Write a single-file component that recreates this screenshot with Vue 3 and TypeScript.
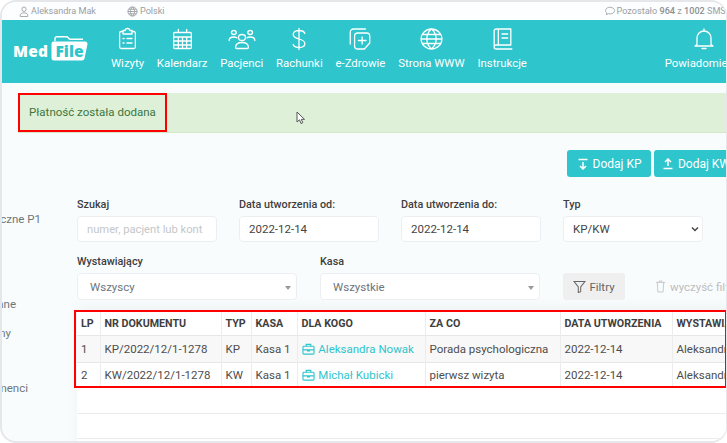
<script setup lang="ts">
interface NavItem {
  label: string;
  icon: string;
  w: number;
}

// sciezki ikon w menu, rysowane w viewBox 24x24
const nav: NavItem[] = [
  { label: "Wizyty", w: 27, icon: "M8 4.500H6.500A1.500 1.500 0 0 0 5 6v14a1.500 1.500 0 0 0 1.500 1.500h11A1.500 1.500 0 0 0 19 20V6a1.500 1.500 0 0 0-1.500-1.500H16M8 3.500h2a2 2 0 0 1 4 0h2V7H8zM8 11.500h1M11.500 11.500H16M8 16h1M11.500 16H16" },
  { label: "Kalendarz", w: 25, icon: "M4.500 5.500h15a1 1 0 0 1 1 1v14a1 1 0 0 1-1 1h-15a1 1 0 0 1-1-1v-14a1 1 0 0 1 1-1zM3.500 10h17M3.500 14h17M3.500 18h17M8 10v11.500M12 10v11.500M16 10v11.500M8 2.500v3M16 2.500v3" },
  { label: "Pacjenci", w: 28, icon: "M12 7.500a3 3 0 1 0 0 6 3 3 0 0 0 0-6zM5 3.500a2 2 0 1 0 0 4 2 2 0 0 0 0-4zM19 3.500a2 2 0 1 0 0 4 2 2 0 0 0 0-4zM1 13.500c0-2.500 1.500-3.500 4-3.500 1 0 2 .2 2.600.8M23 13.500c0-2.500-1.500-3.500-4-3.500-1 0-2 .2-2.600.8M6.500 20.500c0-3.500 2-5 5.500-5s5.500 1.500 5.500 5c0 .6-.4 1-1 1h-9c-.6 0-1-.4-1-1z" },
  { label: "Rachunki", w: 28, icon: "M12 1.500v21M17 6.500c-.5-2-2.500-3-5-3-3 0-5 1.500-5 4s2 3.500 5 4.500 5 2 5 4.500-2 4-5 4c-2.500 0-4.500-1-5-3" },
  { label: "e-Zdrowie", w: 26, icon: "M3 17V5a3 3 0 0 1 3-3h11M7 9a3 3 0 0 1 3-3h8a3 3 0 0 1 3 3v7l-5 6h-6a3 3 0 0 1-3-3zM14 10v7M10.500 13.500h7" },
  { label: "Strona WWW", w: 25, icon: "M12 2a10 10 0 1 0 0 20 10 10 0 0 0 0-20zM2 12h20M3.300 7.500h17.400M3.300 16.500h17.400M12 2c-6 5.500-6 14.500 0 20M12 2c6 5.500 6 14.500 0 20" },
  { label: "Instrukcje", w: 25, icon: "M4 19V4a2 2 0 0 1 2-2h14v16H6a2 2 0 0 0-2 2 2 2 0 0 0 2 2h15M8 2v16M11.500 7h5.500M11.500 11h5.500" },
  { label: "Powiadomienia", w: 24, icon: "M5 17.500V11a7 7 0 0 1 14 0v6.500l2 1.500H3zM12 4V2M10 21.500h4" },
];

interface Row {
  lp: number;
  nr: string;
  typ: string;
  kasa: string;
  dla: string;
  za: string;
  data: string;
  kto: string;
}

const rows: Row[] = [
  { lp: 1, nr: "KP/2022/12/1-1278", typ: "KP", kasa: "Kasa 1", dla: "Aleksandra Nowak", za: "Porada psychologiczna", data: "2022-12-14", kto: "Aleksandra Mak" },
  { lp: 2, nr: "KW/2022/12/1-1278", typ: "KW", kasa: "Kasa 1", dla: "Michał Kubicki", za: "pierwsz wizyta", data: "2022-12-14", kto: "Aleksandra Mak" },
];

const side = [
  { text: "Raporty roczne P1", cls: "s1" },
  { text: "Dane firmowane", cls: "s2" },
  { text: "Pracownicy firmy", cls: "s3" },
  { text: "Abonamenci", cls: "s4" },
];
</script>

<template>
  <div class="frame">
    <div class="topbar">
      <span class="tb-item user">
        <svg width="10" height="11" viewBox="0 0 12 12" preserveAspectRatio="none" fill="none" stroke="#9a9fa3" stroke-width="1">
          <circle cx="6" cy="3.500" r="2.500" />
          <path d="M1.500 11.500V10c0-1.500 1.500-2.500 4.500-2.500s4.500 1 4.500 2.500v1.500z" />
        </svg>
        Aleksandra Mak
      </span>
      <span class="tb-item lang">
        <svg width="11" height="11" viewBox="0 0 12 12" fill="none" stroke="#9a9fa3" stroke-width="1">
          <circle cx="6" cy="6" r="5" />
          <path d="M1 6h10M2 3.500h8M2 8.500h8M6 1c-3 2.800-3 7.200 0 10M6 1c3 2.800 3 7.200 0 10" />
        </svg>
        Polski
      </span>
      <span class="tb-item sms">
        <svg width="10" height="10" viewBox="0 0 12 12" fill="none" stroke="#9a9fa3" stroke-width="1">
          <path d="M6 1.500c3 0 5.500 1.700 5.500 4s-2.500 4-5.500 4c-.7 0-1.300-.1-1.900-.3L1.500 10.500l.8-2.200C1.200 7.500.5 6.600.5 5.500c0-2.300 2.500-4 5.500-4z" />
        </svg>
        <span>Pozostało <b>964</b> z <b>1002</b> SMS</span>
      </span>
    </div>

    <header class="header">
      <div class="logo">
        <span class="med">Med</span>
        <svg class="folder" width="37" height="25" viewBox="0 0 37 25">
          <path d="M4 5V2.500Q4 .8 6 .8h9q1.500 0 2.500 1.200l1 1.200H32" fill="none" stroke="#fff" stroke-width="1.400" />
          <path d="M2.500 5.500H34q2.500 0 2.500 2.500L33.500 22.500q-.5 2-2.500 2H3q-2.500 0-2.500-2.500V7.500q0-2 2-2z" fill="#fff" />
          <text x="4.500" y="20.500" class="file">File</text>
        </svg>
      </div>
      <nav class="nav">
        <a v-for="item in nav" :key="item.label" class="nav-item">
          <svg :width="item.w" height="24" viewBox="0 0 24 24" preserveAspectRatio="none" fill="none" stroke="#fff" stroke-width="1.300" stroke-linecap="round" stroke-linejoin="round">
            <path :d="item.icon" vector-effect="non-scaling-stroke" />
          </svg>
          <span>{{ item.label }}</span>
        </a>
      </nav>
    </header>

    <div class="alert">
      <div class="alert-mark">Płatność została dodana</div>
      <svg class="cursor" width="10" height="14" viewBox="0 0 10 14">
        <path d="M1 1v10l2.500-2.200L5 12.500l1.800-.8L5.300 8.300H8.500z" fill="#fff" stroke="#555" stroke-width="1" />
      </svg>
    </div>

    <div class="content">
      <aside class="side">
        <div v-for="s in side" :key="s.cls" class="side-item" :class="s.cls">{{ s.text }}</div>
      </aside>

      <main class="main">
        <div class="actions">
          <button class="btn">
            <svg width="12" height="12" viewBox="0 0 12 12" fill="none" stroke="#fff" stroke-width="1.500">
              <path d="M1.500 1.500h9M6 4v7M3 8l3 3 3-3" />
            </svg>
            Dodaj KP
          </button>
          <button class="btn">
            <svg width="12" height="12" viewBox="0 0 12 12" fill="none" stroke="#fff" stroke-width="1.500">
              <path d="M1.500 10.500h9M6 8V1M3 4l3-3 3 3" />
            </svg>
            Dodaj KW
          </button>
        </div>

        <div class="filters">
          <label class="field">
            <span class="lbl">Szukaj</span>
            <span class="box placeholder">numer, pacjent lub kont</span>
          </label>
          <label class="field">
            <span class="lbl">Data utworzenia od:</span>
            <span class="box">2022-12-14</span>
          </label>
          <label class="field">
            <span class="lbl">Data utworzenia do:</span>
            <span class="box">2022-12-14</span>
          </label>
          <label class="field">
            <span class="lbl">Typ</span>
            <span class="box typ">
              KP/KW
              <svg width="8" height="6" viewBox="0 0 8 6" fill="none" stroke="#444" stroke-width="1.400"><path d="M1 1.500l3 3 3-3" /></svg>
            </span>
          </label>
        </div>

        <div class="filters second">
          <label class="field wide">
            <span class="lbl">Wystawiający</span>
            <span class="box sel">Wszyscy<i class="caret"></i></span>
          </label>
          <label class="field wide">
            <span class="lbl">Kasa</span>
            <span class="box sel">Wszystkie<i class="caret"></i></span>
          </label>
          <button class="filter-btn">
            <svg width="13" height="13" viewBox="0 0 14 14" fill="none" stroke="#666" stroke-width="1.100">
              <path d="M1 1.500h12L8.300 7.500v5l-2.600 1V7.500z" />
            </svg>
            Filtry
          </button>
          <span class="clear">
            <svg width="11" height="13" viewBox="0 0 12 14" fill="none" stroke="#c4c4c4" stroke-width="1">
              <path d="M1 2.500h10M2.500 2.500l.7 10.500h5.600l.7-10.500M4.500 2.500V1h3v1.500" />
            </svg>
            wyczyść filtry
          </span>
        </div>

        <section class="card">
          <div class="mark">
            <table class="grid">
              <colgroup>
                <col style="width: 23px" />
                <col style="width: 121px" />
                <col style="width: 30px" />
                <col style="width: 46px" />
                <col style="width: 128px" />
                <col style="width: 135px" />
                <col style="width: 112px" />
                <col style="width: 120px" />
              </colgroup>
              <thead>
                <tr>
                  <th>LP</th>
                  <th>NR DOKUMENTU</th>
                  <th>TYP</th>
                  <th>KASA</th>
                  <th>DLA KOGO</th>
                  <th>ZA CO</th>
                  <th>DATA UTWORZENIA</th>
                  <th>WYSTAWIAJĄCY</th>
                </tr>
              </thead>
              <tbody>
                <tr v-for="r in rows" :key="r.lp">
                  <td>{{ r.lp }}</td>
                  <td>{{ r.nr }}</td>
                  <td>{{ r.typ }}</td>
                  <td>{{ r.kasa }}</td>
                  <td class="who">
                    <svg width="13" height="12" viewBox="0 0 14 13" fill="none" stroke="#2ec5cd" stroke-width="1.200">
                      <rect x="1" y="3.500" width="12" height="8.500" rx="1" />
                      <path d="M4.500 3.500V1.500h5v2M1 7.500h12M6 7.500v1h2v-1" />
                    </svg>
                    {{ r.dla }}
                  </td>
                  <td>{{ r.za }}</td>
                  <td>{{ r.data }}</td>
                  <td>{{ r.kto }}</td>
                </tr>
              </tbody>
            </table>
          </div>
          <div class="blank first"></div>
          <div class="blank"></div>
        </section>
      </main>
    </div>
  </div>
</template>

<style>
html,
body {
  margin: 0;
  background: #fff;
  overflow: hidden;
}
</style>

<style scoped>
.frame {
  box-sizing: border-box;
  width: 727px;
  height: 443px;
  overflow: hidden;
  border: 2px solid #e6e7ea;
  border-right-width: 1px;
  border-radius: 16px;
  background: #f9fcfd;
  font-family: Roboto, "Liberation Sans", sans-serif;
  color: #4a4a4a;
}

.topbar {
  display: flex;
  align-items: center;
  height: 18px;
  padding-left: 17px;
  background: #fcfeff;
  font-size: 9.100px;
  color: #9a9fa3;
  white-space: nowrap;
}

.tb-item {
  display: inline-flex;
  align-items: center;
  gap: 2px;
}

.tb-item b {
  font-weight: 500;
  color: #8a8f93;
}

.lang {
  margin-left: 31px;
}

.sms {
  margin-left: 440px;
}

.header {
  display: flex;
  height: 63px;
  background: #2ec5cd;
  color: #fff;
  overflow: hidden;
}

.logo {
  display: flex;
  align-items: flex-end;
  width: 109px;
  flex: none;
  box-sizing: border-box;
  padding: 0 0 22px 11px;
  gap: 3px;
}

.med {
  font-family: "Open Sans", sans-serif;
  font-weight: 800;
  font-size: 15.500px;
  line-height: 18px;
  letter-spacing: 0.2px;
  margin-bottom: 1px;
}

.folder {
  flex: none;
}

.file {
  font-family: "Open Sans", sans-serif;
  font-weight: 800;
  font-size: 15.500px;
  fill: #2ec5cd;
}

.nav {
  display: flex;
  gap: 12.800px;
  white-space: nowrap;
}

.nav-item {
  display: flex;
  flex-direction: column;
  align-items: center;
  padding-top: 7px;
  font-size: 11.400px;
  line-height: 14px;
  color: #fff;
}

.nav-item span {
  margin-top: 5px;
}

.nav-item:last-child {
  margin-left: 125px;
}

.alert {
  position: relative;
  height: 40px;
  margin: 10px 0 0 16px;
  box-sizing: border-box;
  background: #dff0d8;
  border-bottom: 1px solid #d6e9c6;
  color: #3c763d;
  font-size: 11.500px;
}

.alert-mark {
  box-sizing: border-box;
  width: 149px;
  height: 39px;
  padding-left: 9px;
  border: 2px solid #f00;
  line-height: 35px;
  white-space: nowrap;
}

.cursor {
  position: absolute;
  left: 278px;
  top: 18px;
}

.content {
  display: flex;
}

.side {
  flex: none;
  width: 75px;
  overflow: hidden;
  font-size: 11.500px;
  color: #6d767b;
  white-space: nowrap;
}

.side-item {
  line-height: 14px;
  display: flex;
  justify-content: flex-end;
}

.s1 {
  margin-top: 79px;
  margin-right: 36px;
}

.s2 {
  margin-top: 71px;
  margin-right: 61px;
}

.s3 {
  margin-top: 15px;
  margin-right: 66px;
}

.s4 {
  margin-top: 41px;
  margin-right: 49px;
}

.main {
  flex: none;
  width: 700px;
}

.actions {
  display: flex;
  gap: 3px;
  padding: 17px 0 0 490px;
}

.btn {
  display: inline-flex;
  align-items: center;
  justify-content: center;
  gap: 4px;
  flex: none;
  width: 84px;
  height: 27px;
  padding: 0;
  border: 0;
  border-radius: 3px;
  background: #2ec5cd;
  color: #fff;
  font: 12px Roboto, sans-serif;
  white-space: nowrap;
}

.filters {
  display: flex;
  gap: 22px;
  margin-top: 21px;
}

.second {
  margin-top: 13px;
  align-items: flex-end;
  gap: 23px;
}

.field {
  display: flex;
  flex-direction: column;
  width: 140px;
  flex: none;
}

.wide {
  width: 220px;
}

.lbl {
  font-size: 10.800px;
  font-weight: 500;
  line-height: 14px;
  color: #3e3e3e;
  margin-bottom: 4px;
  white-space: nowrap;
}

.box {
  box-sizing: border-box;
  display: flex;
  align-items: center;
  height: 26px;
  padding: 0 9px;
  background: #fff;
  border: 1px solid #eceff1;
  border-radius: 4px;
  font-size: 11.500px;
  color: #444;
  white-space: nowrap;
  overflow: hidden;
}

.placeholder {
  color: #c4c7c9;
  font-size: 11.200px;
}

.typ {
  justify-content: space-between;
  padding-right: 3px;
}

.sel {
  position: relative;
  padding-left: 12px;
  height: 27px;
  color: #6c757d;
}

.caret {
  position: absolute;
  right: 5px;
  top: 12px;
  border: 3px solid transparent;
  border-top: 4px solid #9a9a9a;
  border-bottom: 0;
}

.filter-btn {
  display: inline-flex;
  align-items: center;
  justify-content: center;
  gap: 3px;
  flex: none;
  width: 62px;
  height: 27px;
  padding: 0;
  border: 0;
  border-radius: 3px;
  background: #efefef;
  color: #666;
  font: 11.500px Roboto, sans-serif;
}

.clear {
  display: inline-flex;
  align-items: center;
  gap: 4px;
  height: 27px;
  margin-left: 7px;
  font-size: 11.500px;
  color: #bdbdbd;
  white-space: nowrap;
}

.card {
  margin-top: 10px;
  height: 140px;
  background: #fff;
  box-shadow: 0 -4px 12px rgba(0, 0, 0, 0.04);
}

.mark {
  box-sizing: border-box;
  position: relative;
  left: -3px;
  width: 653px;
  height: 78px;
  overflow: hidden;
  border: 2px solid #f00;
}

.grid {
  table-layout: fixed;
  border-collapse: collapse;
  width: 715px;
  margin-left: 1px;
  font-size: 11.500px;
  color: #4d4d4d;
}

.grid th {
  height: 23px;
  padding: 0 4px;
  text-align: left;
  font-size: 10.700px;
  font-weight: 700;
  color: #3e3e3e;
  border-right: 1px solid #ececec;
  white-space: nowrap;
  overflow: hidden;
}

.grid td {
  height: 26px;
  padding: 0 4px;
  border-top: 1px solid #e6e6e6;
  border-right: 1px solid #ececec;
  white-space: nowrap;
  overflow: hidden;
}

.grid tbody tr:first-child {
  background: #f8f8f8;
}

.grid tbody tr:last-child td {
  height: 24px;
}

.who {
  color: #2ec5cd;
}

.who svg {
  vertical-align: -2px;
  margin-right: 1px;
}

.blank {
  box-sizing: border-box;
  height: 25px;
  border-bottom: 1px solid #ececec;
}

.first {
  height: 26px;
}
</style>
